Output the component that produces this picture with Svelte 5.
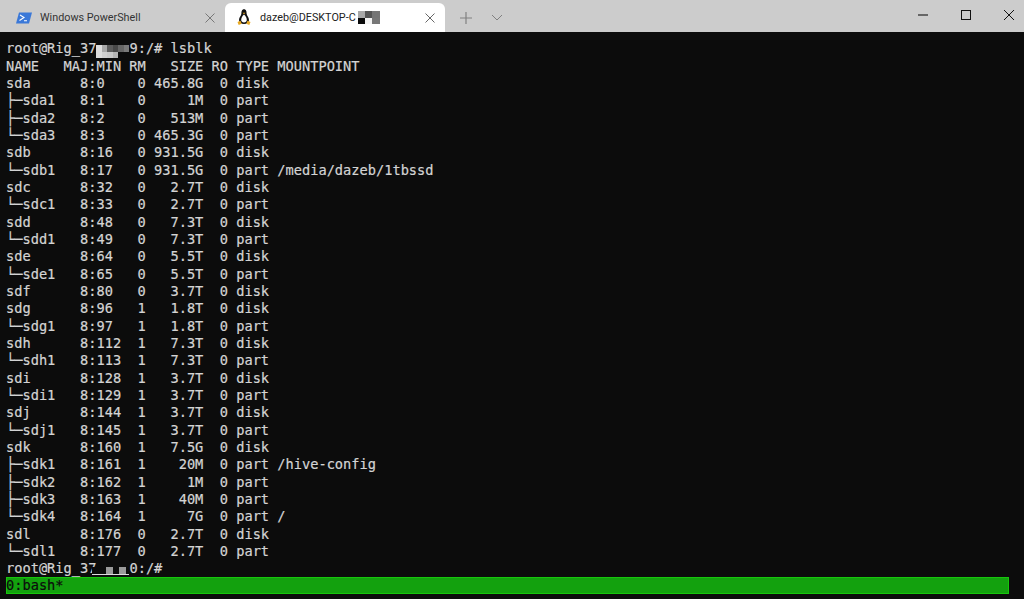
<script>
  const rows = [
    "NAME   MAJ:MIN RM   SIZE RO TYPE MOUNTPOINT",
    "sda      8:0    0 465.8G  0 disk ",
    "├─sda1   8:1    0     1M  0 part ",
    "├─sda2   8:2    0   513M  0 part ",
    "└─sda3   8:3    0 465.3G  0 part ",
    "sdb      8:16   0 931.5G  0 disk ",
    "└─sdb1   8:17   0 931.5G  0 part /media/dazeb/1tbssd",
    "sdc      8:32   0   2.7T  0 disk ",
    "└─sdc1   8:33   0   2.7T  0 part ",
    "sdd      8:48   0   7.3T  0 disk ",
    "└─sdd1   8:49   0   7.3T  0 part ",
    "sde      8:64   0   5.5T  0 disk ",
    "└─sde1   8:65   0   5.5T  0 part ",
    "sdf      8:80   0   3.7T  0 disk ",
    "sdg      8:96   1   1.8T  0 disk ",
    "└─sdg1   8:97   1   1.8T  0 part ",
    "sdh      8:112  1   7.3T  0 disk ",
    "└─sdh1   8:113  1   7.3T  0 part ",
    "sdi      8:128  1   3.7T  0 disk ",
    "└─sdi1   8:129  1   3.7T  0 part ",
    "sdj      8:144  1   3.7T  0 disk ",
    "└─sdj1   8:145  1   3.7T  0 part ",
    "sdk      8:160  1   7.5G  0 disk ",
    "├─sdk1   8:161  1    20M  0 part /hive-config",
    "├─sdk2   8:162  1     1M  0 part ",
    "├─sdk3   8:163  1    40M  0 part ",
    "└─sdk4   8:164  1     7G  0 part /",
    "sdl      8:176  0   2.7T  0 disk ",
    "└─sdl1   8:177  0   2.7T  0 part "
  ];
  const promptCells = ["#dcdcdc","#a8a8a8","#5c5c5c","#484848","#666","#7a7a7a","#dcdcdc","#cfcfcf","#c8c8c8","#b4b4b4","#0c0c0c","#0c0c0c"];
  const tabCells = ["#a8a8a8","#555","#757575","#0a0a0a","#f4f4f4","#777"];
</script>

<div class="window">
  <header class="titlebar">
    <div class="tab">
      <svg class="icon" viewBox="0 0 16 12" width="16" height="12">
        <path d="M3 0.500h13l-3 11H0z" fill="#3a78d8" />
        <path d="M4 3l4 2.500-4.500 3M8 8.800h3" fill="none" stroke="#fff" stroke-width="1.100" />
      </svg>
      <span class="label">Windows PowerShell</span>
      <svg class="close" viewBox="0 0 10 10" width="10" height="10"><path d="M0.500 0.500l9 9M9.500 0.500l-9 9" stroke="#777" fill="none" /></svg>
    </div>
    <div class="tab active">
      <svg class="icon penguin" viewBox="0 0 14 16" width="14" height="16">
        <path d="M7 0.200C4.800 0.200 4.400 2.500 4.400 4.500c0 1.800-2.400 3.800-2.400 6.500 0 2 2 4 5 4s5-2 5-4c0-2.700-2.400-4.700-2.400-6.500C9.600 2.500 9.200 0.200 7 0.200z" fill="#111" />
        <path d="M7 5.500c-1.300 1-2.800 3.200-2.800 5.500 0 1.500 1.200 2.500 2.800 2.500s2.800-1 2.800-2.500c0-2.300-1.500-4.500-2.800-5.500z" fill="#fff" />
        <path d="M5.600 3.800h2.800L7 5.300z" fill="#e8a820" />
        <path d="M0.500 13l3-1.200 1.200 3-3 1.200zM13.500 13l-3-1.200-1.200 3 3 1.200z" fill="#e8a820" />
      </svg>
      <span class="label">dazeb@DESKTOP-C</span>
      <span class="tabc">
        {#each tabCells as c}<i style:background={c}></i>{/each}
      </span>
      <svg class="close" viewBox="0 0 10 10" width="10" height="10"><path d="M0.500 0.500l9 9M9.500 0.500l-9 9" stroke="#666" fill="none" /></svg>
    </div>
    <div class="tools">
      <svg viewBox="0 0 12 12" width="12" height="12"><path d="M6 0v12M0 6h12" stroke="#808080" stroke-width="1.200" fill="none" /></svg>
      <svg viewBox="0 0 12 7" width="12" height="7"><path d="M1 1l5 5 5-5" stroke="#808080" fill="none" /></svg>
    </div>
    <div class="controls">
      <svg viewBox="0 0 10 10" width="10" height="10"><path d="M0 5h10" stroke="#222" stroke-width="1.200" /></svg>
      <svg viewBox="0 0 10 10" width="10" height="10"><rect x="0.500" y="0.500" width="9" height="9" fill="none" stroke="#111" /></svg>
      <svg viewBox="0 0 10 10" width="10" height="10"><path d="M0 0l10 10M10 0L0 10" stroke="#111" fill="none" /></svg>
    </div>
  </header>
  <main class="term">
    <div class="line">root@Rig_37<span class="c1">{#each promptCells as c}<i style:background={c}></i>{/each}</span>9:/# lsblk</div>
    {#each rows as row}
      <div class="line">{row}</div>
    {/each}
    <div class="line">root@Rig_37<span class="c2"><i></i><i></i></span>0:/#</div>
    <div class="status">0:bash*</div>
  </main>
</div>

<style>
  :global(body) { margin: 0; background: #0c0c0c; }
  .window { width: 1024px; height: 599px; display: flex; flex-direction: column; overflow: hidden; }
  .titlebar {
    height: 32px; flex: none; background: #cccccc; display: flex; align-items: flex-end;
    font-family: Roboto, "Noto Sans", sans-serif; font-size: 10.8px; color: #333;
  }
  .tab {
    width: 225px; height: 29px; display: flex; align-items: center; box-sizing: border-box;
    padding: 0 10px 0 16px; gap: 8px; flex: none;
  }
  .tab.active { width: 220px; background: #fff; border-radius: 6px 6px 0 0; padding-left: 12px; gap: 9px; color: #222; }
  .icon { flex: none; }
  .penguin { margin-bottom: 1px; }
  .label { white-space: nowrap; }
  .close { margin-left: auto; flex: none; }
  .tabc { display: grid; grid-template-columns: repeat(3, 1fr); grid-template-rows: 7px 6px; width: 22px; flex: none; margin-left: -7px; }
  .tools { display: flex; align-items: center; gap: 19px; height: 29px; margin-left: 15px; }
  .controls { margin-left: auto; height: 30px; align-self: flex-start; display: flex; align-items: center; gap: 33px; padding-right: 10px; }
  .term {
    flex: 1; background: #0c0c0c; padding: 8.4px 6px 0; color: #d4d4d4; position: relative;
    font-family: "DejaVu Sans Mono", monospace; font-size: 13.67px; box-sizing: border-box;
    -webkit-text-stroke: 0.2px currentColor;
  }
  .line { height: 17.33px; line-height: 17.33px; white-space: pre; }
  .c1 {
    display: inline-grid; grid-template-columns: repeat(6, 1fr); grid-template-rows: 7px 6px;
    width: 33px; vertical-align: 1px;
  }
  .c2 {
    display: inline-flex; justify-content: space-around; align-items: flex-end; box-sizing: border-box;
    width: 37px; margin-left: -4px; height: 8px; vertical-align: -1px; padding-left: 10px;
    background: #0c0c0c; border-bottom: 1px solid #ddd;
  }
  .c2 i { width: 7px; height: 7px; background: #9a9a9a; }
  .status {
    height: 17px; line-height: 17px; margin-top: -0.5px; width: 1003px; background: #13a10e; color: #0c0c0c;
    box-shadow: inset 0 0 0 1px #16c60c;
  }
</style>
